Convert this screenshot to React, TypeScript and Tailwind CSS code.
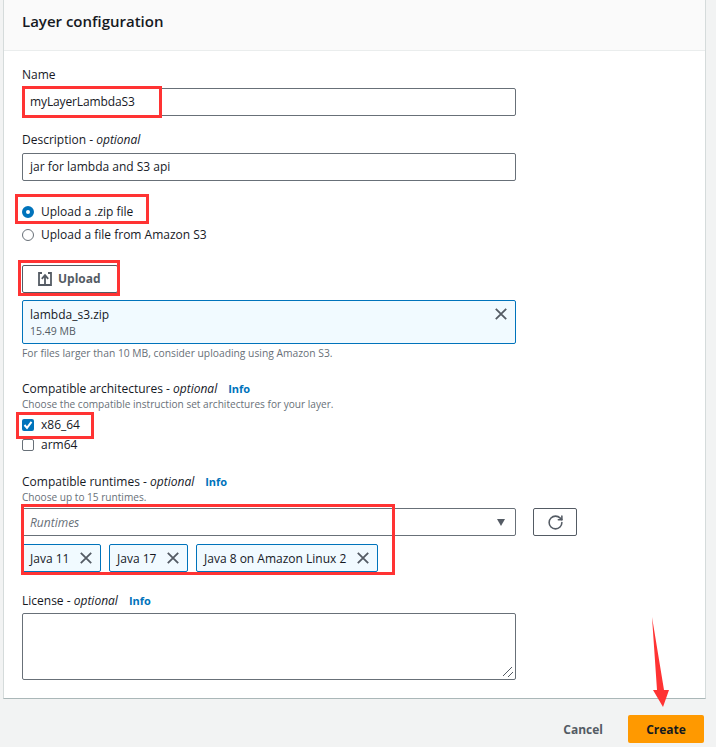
import React from 'react';
import { RotateCw } from 'lucide-react';

const Optional = () => <span className="text-[#16191f]"> - <i className="italic">optional</i></span>;

const Info = () => <a className="ml-[11px] text-[11px] font-bold text-[#0073bb]">Info</a>;

const Label: React.FC<{ children: React.ReactNode; className?: string }> = ({ children, className = '' }) => (
  <div className={`text-[12px] text-[#16191f] ${className}`}>{children}</div>
);

const Hint: React.FC<{ children: React.ReactNode; className?: string }> = ({ children, className = '' }) => (
  <div className={`leading-[14px] text-[#687078] ${className}`}>{children}</div>
);

const CloseIcon: React.FC<{ className?: string }> = ({ className = '' }) => (
  <svg width="12" height="12" viewBox="0 0 12 12" fill="none" stroke="#545b64" strokeWidth="1.8" className={className}>
    <path d="M0.8 0.8 11.2 11.2M11.2 0.8 0.8 11.2" />
  </svg>
);

const Chip: React.FC<{ label: string; className?: string }> = ({ label, className = '' }) => (
  <div className={`h-[28px] flex items-center justify-between pl-[7px] pr-[8px] border border-[#0073bb] rounded-[2px] bg-[#f1faff] text-[12px] text-[#16191f] ${className}`}>
    <span className="pt-[1px]">{label}</span>
    <CloseIcon />
  </div>
);

// red marks drawn on top of the screenshot
const Mark: React.FC<{ className: string }> = ({ className }) => (
  <div className={`absolute border-[3px] border-[#ff3333] pointer-events-none ${className}`} />
);

export default function App() {
  return (
    <div className="relative w-[716px] h-[747px] overflow-hidden bg-[#f2f3f3] font-['Open_Sans','Noto_Sans',sans-serif]">
      <div className="ml-[3px] w-[703px] h-[699px] bg-white border-x border-b border-x-[#d5dbdb] border-b-[#aab7b8]">
        <div className="h-[51px] pl-[18px] pt-[11px] bg-[#fafafa] border-b border-[#eaeded] text-[15px] leading-[20px] font-semibold text-[#16191f]">
          Layer configuration
        </div>

        <div className="pl-[18px] w-[512px]">
          <Label className="mt-[16px] leading-[16px]">Name</Label>
          <div className="mt-[5px] h-[28px] flex items-center px-[7px] border border-[#687078] rounded-[2px] text-[12px] tracking-[-0.12px] text-[#16191f]">
            myLayerLambdaS3
          </div>

          <Label className="mt-[16px] leading-[16px]">
            Description<Optional />
          </Label>
          <div className="mt-[5px] h-[28px] flex items-center px-[7px] border border-[#687078] rounded-[2px] text-[12px] text-[#16191f]">
            jar for lambda and S3 api
          </div>

          <div className="mt-[23px] h-[16px] flex items-center gap-[7px] text-[12px] text-[#16191f]">
            <div className="w-[12px] h-[12px] rounded-full border-[4px] border-[#0073bb] bg-white" />
            Upload a .zip file
          </div>
          <div className="mt-[7px] h-[16px] flex items-center gap-[7px] text-[12px] text-[#16191f]">
            <div className="w-[12px] h-[12px] rounded-full border border-[#687078] bg-white" />
            Upload a file from Amazon S3
          </div>

          <div className="mt-[22px] w-[96px] h-[28px] flex items-center pl-[15px] gap-[6px] border border-[#545b64] rounded-[2px] text-[12px] font-bold text-[#545b64]">
            <svg width="14" height="14" viewBox="0 0 14 14" fill="none" stroke="#545b64" strokeWidth="1.8">
              <path d="M4 1h-3v12h12v-12h-3" />
              <path d="M7 12v-8M3.8 6.8 7 3.2l3.2 3.6" />
            </svg>
            Upload
          </div>

          <div className="mt-[7px] h-[44px] relative px-[7px] pt-[5px] border border-[#0073bb] rounded-[2px] bg-[#f1faff]">
            <div className="text-[12px] leading-[18px] text-[#16191f]">lambda_s3.zip</div>
            <div className="text-[10.5px] leading-[15px] text-[#545b64]">15.49 MB</div>
            <CloseIcon className="absolute right-[8px] top-[7px]" />
          </div>
          <Hint className="mt-[2px] text-[10.3px]">For files larger than 10 MB, consider uploading using Amazon S3.</Hint>

          <Label className="mt-[21px] leading-[15px]">
            Compatible architectures<Optional />
            <Info />
          </Label>
          <Hint className="mt-[1px] text-[10.1px]">Choose the compatible instruction set architectures for your layer.</Hint>
          <div className="mt-[6px] h-[16px] flex items-center gap-[7px] text-[12px] text-[#16191f]">
            <div className="w-[12px] h-[12px] rounded-[2px] bg-[#0073bb] flex items-center justify-center">
              <svg width="10" height="10" viewBox="0 0 10 10" fill="none" stroke="white" strokeWidth="2">
                <path d="M1.5 5 4 7.8 8.5 1.8" />
              </svg>
            </div>
            x86_64
          </div>
          <div className="mt-[4px] h-[16px] flex items-center gap-[7px] text-[12px] text-[#16191f]">
            <div className="w-[12px] h-[12px] rounded-[2px] border border-[#687078] bg-white" />
            arm64
          </div>

          <Label className="mt-[21px] leading-[15px]">
            Compatible runtimes<Optional />
            <Info />
          </Label>
          <Hint className="mt-[1px] text-[10.1px]">Choose up to 15 runtimes.</Hint>

          <div className="mt-[4px] flex gap-[17px] w-[556px]">
            <div className="w-[494px] shrink-0 h-[28px] flex items-center justify-between pl-[7px] pr-[10px] border border-[#687078] rounded-[2px] text-[12px] italic text-[#687078]">
              <span className="pt-[1px]">Runtimes</span>
              <div className="w-0 h-0 border-x-[4px] border-x-transparent border-t-[7px] border-t-[#545b64]" />
            </div>
            <div className="w-[44px] shrink-0 h-[28px] flex items-center justify-center border border-[#545b64] rounded-[2px]">
              <RotateCw size={17} strokeWidth={2.2} className="text-[#545b64]" />
            </div>
          </div>

          <div className="mt-[8px] flex gap-[8px] w-[400px]">
            <Chip label="Java 11" className="w-[79px]" />
            <Chip label="Java 17" className="w-[79px]" />
            <Chip label="Java 8 on Amazon Linux 2" className="w-[182px]" />
          </div>

          <Label className="mt-[21px] leading-[15px]">
            License<Optional />
            <Info />
          </Label>
          <div className="mt-[5px] h-[67px] relative border border-[#687078] rounded-[2px]">
            <svg width="12" height="12" viewBox="0 0 12 12" fill="none" stroke="#545b64" strokeWidth="1" className="absolute right-[1px] bottom-[1px]">
              <path d="M1 10 10 1M6 11 11 6" />
            </svg>
          </div>
        </div>
      </div>

      <div className="h-[60px] pr-[12px] flex items-center justify-end gap-[25px]">
        <span className="pt-[1px] text-[12px] font-bold text-[#545b64]">Cancel</span>
        <div className="w-[76px] h-[28px] pt-[1px] flex items-center justify-center rounded-[2px] bg-[#ff9900] text-[12px] font-bold text-[#16191f]">
          Create
        </div>
      </div>

      <Mark className="left-[22px] top-[86px] w-[140px] h-[32px]" />
      <Mark className="left-[15px] top-[194px] w-[134px] h-[30px]" />
      <Mark className="left-[18px] top-[260px] w-[102px] h-[36px]" />
      <Mark className="left-[16px] top-[412px] w-[78px] h-[27px]" />
      <Mark className="left-[21px] top-[504px] w-[374px] h-[71px]" />
      <svg width="24" height="96" viewBox="0 0 24 96" className="absolute left-[650px] top-[615px]">
        <path d="M2 2 7 75 3 75 13 92 19 75 14 75Z" fill="#ff3333" />
      </svg>
    </div>
  );
}
